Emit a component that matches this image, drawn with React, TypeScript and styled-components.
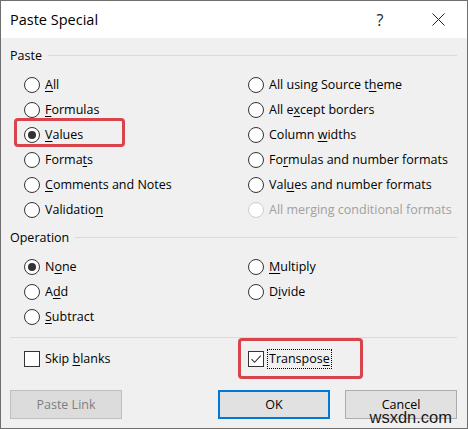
import React from "react";
import styled, { createGlobalStyle, css } from "styled-components";

const GlobalStyle = createGlobalStyle`
  html, body {
    margin: 0;
    padding: 0;
    background: #f0f0f0;
  }

  body {
    font-family: "Open Sans", "Noto Sans", sans-serif;
  }
`;

type Option = {
	label: string;
	checked?: boolean;
	disabled?: boolean;
	mark?: { top: number; width: number; height: number };
	focused?: boolean;
};

// "&" marks the access key, as in a Win32 resource file
const pasteOptions: (Option | null)[] = [
	{ label: "&All" },
	{ label: "All using Source t&heme" },
	{ label: "&Formulas" },
	{ label: "All e&xcept borders" },
	{ label: "&Values", checked: true, mark: { top: -4, width: 111, height: 29 } },
	{ label: "Column &widths" },
	{ label: "Forma&ts" },
	{ label: "Fo&rmulas and number formats" },
	{ label: "&Comments and Notes" },
	{ label: "Val&ues and number formats" },
	{ label: "Validatio&n" },
	{ label: "All merging conditional formats", disabled: true },
];

const operationOptions: (Option | null)[] = [
	{ label: "N&one", checked: true },
	{ label: "&Multiply" },
	{ label: "A&dd" },
	{ label: "D&ivide" },
	{ label: "&Subtract" },
	null,
];

const AccessLabel = ({ text }: { text: string }) => {
	const at = text.indexOf("&");
	if (at < 0) return <>{text}</>;
	return (
		<>
			{text.slice(0, at)}
			<Key>{text[at + 1]}</Key>
			{text.slice(at + 2)}
		</>
	);
};

const RadioGroup = ({ options }: { options: (Option | null)[] }) => (
	<OptionGrid>
		{options.map((opt, i) =>
			opt ? (
				<OptionRow key={i} $disabled={opt.disabled}>
					<Radio $checked={opt.checked} $disabled={opt.disabled} />
					<Caption>
						<AccessLabel text={opt.label} />
					</Caption>
					{opt.mark && <Mark style={{ top: opt.mark.top, width: opt.mark.width, height: opt.mark.height }} />}
				</OptionRow>
			) : (
				<span key={i} />
			)
		)}
	</OptionGrid>
);

const CheckMark = () => (
	<svg width="14" height="14" viewBox="0 0 14 14">
		<path d="M2.5 7.2 L5.6 10.3 L11.8 3.6" fill="none" stroke="#333" strokeWidth="1.1" />
	</svg>
);

const App = () => {
	return (
		<>
			<GlobalStyle />
			<Window>
				<TitleBar>
					<Title>Paste Special</Title>
					<TitleButton>?</TitleButton>
					<TitleButton $close>
						<svg width="13" height="13" viewBox="0 0 13 13">
							<path d="M0.5 0.5 L12.5 12.5 M12.5 0.5 L0.5 12.5" stroke="#222" strokeWidth="1" />
						</svg>
					</TitleButton>
				</TitleBar>

				<Body>
					<GroupHeader>
						<GroupTitle>Paste</GroupTitle>
						<Rule />
					</GroupHeader>
					<RadioGroup options={pasteOptions} />

					<GroupHeader $top={7}>
						<GroupTitle>Operation</GroupTitle>
						<Rule />
					</GroupHeader>
					<RadioGroup options={operationOptions} />

					<Separator />

					<OptionGrid $top={8}>
						<OptionRow>
							<CheckBox />
							<Caption>
								<AccessLabel text="Skip &blanks" />
							</Caption>
						</OptionRow>
						<OptionRow>
							<CheckBox>
								<CheckMark />
							</CheckBox>
							<Caption $focused>
								<AccessLabel text="Transpos&e" />
							</Caption>
							<Mark style={{ top: -8, width: 125, height: 41 }} />
						</OptionRow>
					</OptionGrid>

					<ButtonBar>
						<Button disabled>Paste Link</Button>
						<Spacer />
						<Button $default>OK</Button>
						<Button>Cancel</Button>
					</ButtonBar>
				</Body>

				<Watermark>wsxdn.com</Watermark>
			</Window>
		</>
	);
};

const Window = styled.div`
	position: relative;
	box-sizing: border-box;
	width: 468px;
	height: 429px;
	border: 1px solid #6f6f6f;
	background: #f0f0f0;
	color: #000;
	font-size: 12.5px;
	display: flex;
	flex-direction: column;
`;

const TitleBar = styled.div`
	height: 37px;
	background: #fff;
	display: flex;
	align-items: center;
	padding-left: 9px;
	padding-right: 6px;
`;

const Title = styled.div`
	flex: 1;
	font-size: 14.5px;
	color: #000;
`;

const TitleButton = styled.div<{ $close?: boolean }>`
	width: 46px;
	height: 37px;
	display: flex;
	align-items: center;
	justify-content: center;
	font-size: 16px;
	color: #222;
	margin-left: ${(p) => (p.$close ? 12 : 0)}px;
`;

const Body = styled.div`
	flex: 1;
	display: flex;
	flex-direction: column;
	padding: 9px 10px 0 9px;
`;

const GroupHeader = styled.div<{ $top?: number }>`
	height: 18px;
	display: flex;
	align-items: center;
	gap: 6px;
	margin-top: ${(p) => p.$top ?? 0}px;
`;

const GroupTitle = styled.span`
	line-height: 18px;
`;

const Rule = styled.div`
	flex: 1;
	height: 1px;
	margin-top: -1px;
	background: #dadada;
`;

const Separator = styled.div`
	height: 1px;
	background: #dadada;
	margin-top: 8px;
`;

const OptionGrid = styled.div<{ $top?: number }>`
	display: grid;
	grid-template-columns: 224px 1fr;
	grid-auto-rows: 25px;
	padding-left: 14px;
	margin-top: ${(p) => p.$top ?? 7}px;
`;

const OptionRow = styled.div<{ $disabled?: boolean }>`
	position: relative;
	display: flex;
	align-items: center;
	gap: 5px;
	color: ${(p) => (p.$disabled ? "#a0a0a0" : "#000")};
`;

const Radio = styled.span<{ $checked?: boolean; $disabled?: boolean }>`
	position: relative;
	box-sizing: border-box;
	width: 16px;
	height: 16px;
	flex: none;
	border-radius: 50%;
	background: #fff;
	border: 1px solid ${(p) => (p.$disabled ? "#cccccc" : "#333")};

	${(p) =>
		p.$checked &&
		css`
			&::after {
				content: "";
				position: absolute;
				left: 3px;
				top: 3px;
				width: 8px;
				height: 8px;
				border-radius: 50%;
				background: #333;
			}
		`}
`;

const CheckBox = styled.span`
	box-sizing: border-box;
	width: 16px;
	height: 16px;
	flex: none;
	border: 1px solid #333;
	background: #fff;
	display: flex;
	align-items: center;
	justify-content: center;
`;

const Caption = styled.span<{ $focused?: boolean }>`
	line-height: 16px;
	padding: 1px 1px 1px;
	margin-left: -2px;
	border: 1px dotted ${(p) => (p.$focused ? "#000" : "transparent")};
`;

const Key = styled.span`
	text-decoration: underline;
	text-underline-offset: 2px;
`;

// red annotation frame drawn over an option
const Mark = styled.span`
	position: absolute;
	left: -10px;
	box-sizing: border-box;
	border: 3px solid #d9434b;
	border-radius: 4px;
	pointer-events: none;
`;

const ButtonBar = styled.div`
	display: flex;
	gap: 15px;
	margin-top: 19px;
`;

const Spacer = styled.div`
	flex: 1;
`;

const Button = styled.button<{ $default?: boolean }>`
	box-sizing: border-box;
	width: 112px;
	height: 29px;
	padding: 0;
	font: inherit;
	font-size: 12.5px;
	color: #000;
	background: #e1e1e1;
	border: 1px solid #adadad;

	${(p) =>
		p.$default &&
		css`
			border: 2px solid #0078d7;
		`}

	&:disabled {
		background: #dcdcdc;
		border-color: #bfbfbf;
		color: #7f7f7f;
	}
`;

const Watermark = styled.div`
	position: absolute;
	right: 15px;
	bottom: 1px;
	font-family: "Liberation Sans", Arial, sans-serif;
	font-size: 16.5px;
	color: #1a1a1a;
	pointer-events: none;
`;

export default App;
